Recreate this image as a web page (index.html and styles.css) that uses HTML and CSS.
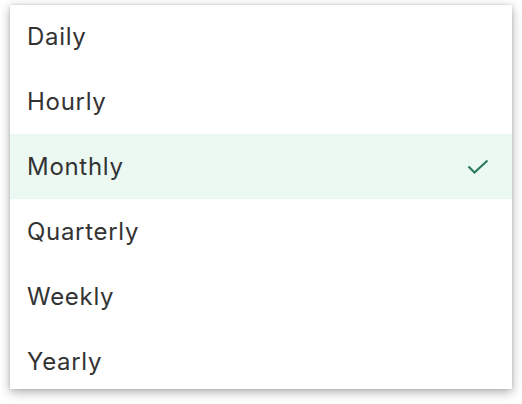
FILE: index.html
```html
<!DOCTYPE html>
<html>
<head>
<meta charset="utf-8">
<link rel="stylesheet" href="styles.css">
</head>
<body>
<div class="panel">
<ul class="menu">
  <li class="item">Daily</li>
  <li class="item">Hourly</li>
  <li class="item selected">Monthly
    <svg class="check" width="22" height="16" viewBox="0 0 22 16"><polyline points="1.5,7.5 7.5,13.5 20.5,1.5" fill="none" stroke="#2b7a5b" stroke-width="2.2"/></svg>
  </li>
  <li class="item">Quarterly</li>
  <li class="item">Weekly</li>
  <li class="item">Yearly</li>
</ul>
</div>
</body>
</html>
```
FILE: styles.css
```css
html, body {
  margin: 0;
  padding: 0;
  background: #ffffff;
}
body {
  padding: 5px 10px 14px 10px;
  font-family: Inter, "Noto Sans", sans-serif;
}
.panel {
  width: 502px;
  height: 384px;
  overflow: hidden;
  background: #ffffff;
  box-shadow: 0 3px 10px rgba(0, 0, 0, 0.32), 0 0 3px rgba(0,0,0,0.12);
}
.menu {
  list-style: none;
  margin: -1px 0 0 0;
  padding: 0;
}
.item {
  height: 65px;
  display: flex;
  align-items: center;
  justify-content: space-between;
  padding: 0 23px 0 17px;
  font-size: 24px;
  color: #333333;
  letter-spacing: 0.7px;
}
.selected {
  background: #ebf9f2;
}
.check {
  display: block;
}
```
